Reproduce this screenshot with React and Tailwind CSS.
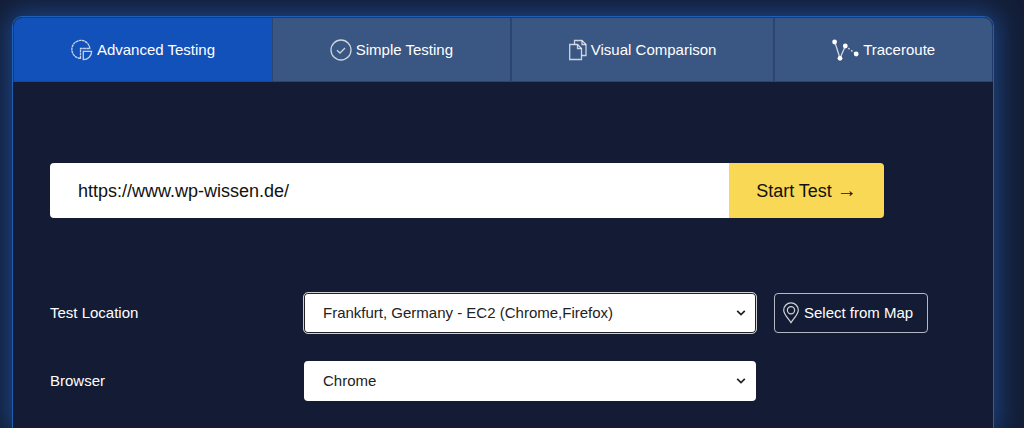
import React, { useState } from "react";

function PieIcon() {
  return (
    <svg className="h-[22px] w-[22px]" viewBox="0 0 22 22" fill="none" stroke="currentColor" strokeWidth="1.3" aria-hidden="true">
      <path d="M9.5 19.4A9 9 0 1 1 18.8 9.5H9.5Z" strokeDasharray="2.8 0.4" />
      <path d="M12.3 12.3H20.7A8.5 8.5 0 0 1 12.3 20.7Z" />
    </svg>
  );
}

function CheckIcon() {
  return (
    <svg className="h-[22px] w-[22px]" viewBox="0 0 22 22" fill="none" stroke="currentColor" strokeWidth="1.3" aria-hidden="true">
      <circle cx="11" cy="11" r="10" />
      <path d="M7 11.2 10 14 15 9" />
    </svg>
  );
}

function PagesIcon() {
  return (
    <svg className="h-[22px] w-[18px]" viewBox="0 0 18 22" fill="none" stroke="currentColor" strokeWidth="1.3" aria-hidden="true">
      <path d="M5.5 5.5V1.5H13L17 5.5V16.5H12.5" />
      <path d="M13 1.5V5.5H17" />
      <path d="M.7 5.5H8.5L12.5 9.5V20.5H.7Z" />
      <path d="M8.5 5.5V9.5H12.5" />
    </svg>
  );
}

function RouteIcon() {
  return (
    <svg className="h-[22px] w-[27px]" viewBox="0 0 27 22" fill="none" stroke="currentColor" strokeWidth="1.3" aria-hidden="true">
      <path d="M2.8 3 8 19.3 13.3 7" />
      <path d="M13.3 7 24 15" strokeWidth="1.5" strokeDasharray="1.8 1.8" />
      <g fill="#fff" stroke="none">
        <circle cx="2.6" cy="3" r="2.4" />
        <circle cx="8" cy="19.3" r="2.4" />
        <circle cx="13.3" cy="7" r="2.4" />
        <circle cx="24.2" cy="15" r="2.4" />
      </g>
    </svg>
  );
}

function PinIcon() {
  return (
    <svg className="h-[22px] w-4" viewBox="0 0 16 22" fill="none" stroke="currentColor" strokeWidth="1.2" aria-hidden="true">
      <path d="M8 20.6C6.2 17.6.7 12.4.7 8.2a7.3 7.3 0 0 1 14.6 0C15.3 12.4 9.8 17.6 8 20.6Z" />
      <circle cx="8" cy="8.2" r="3.6" />
    </svg>
  );
}

const tabs = [
  { id: "advanced", label: "Advanced Testing", icon: <PieIcon /> },
  { id: "simple", label: "Simple Testing", icon: <CheckIcon /> },
  { id: "visual", label: "Visual Comparison", icon: <PagesIcon /> },
  { id: "traceroute", label: "Traceroute", icon: <RouteIcon /> },
];

function Select({ id, options, highlighted = false }) {
  return (
    <div className="relative min-w-0 flex-1">
      <select
        id={id}
        className={`block h-10 w-full appearance-none rounded-sm bg-white pr-10 pl-[19px] text-[15px] text-[#222] ${
          highlighted ? "outline-1 outline-[#d0d0d0] ring-inset ring-1 ring-[#222]" : "outline-none"
        }`}
      >
        {options.map((o) => (
          <option key={o}>{o}</option>
        ))}
      </select>
      <svg
        className="pointer-events-none absolute top-4 right-2.5 h-2 w-2.5"
        viewBox="0 0 10 8"
        fill="none"
        stroke="#222"
        strokeWidth="1.7"
        aria-hidden="true"
      >
        <path d="M1.2 1.8 5 5.6 8.8 1.8" />
      </svg>
    </div>
  );
}

export default function App() {
  const [active, setActive] = useState("advanced");
  const [url, setUrl] = useState("https://www.wp-wissen.de/");

  return (
    <div className="flex min-h-screen flex-col overflow-hidden bg-[#131d36] pt-4 pr-[30px] pl-3 font-['Liberation_Sans',Arial,sans-serif] text-[15px] text-white">
      <main className="flex-1 rounded-t-[10px] border border-b-0 border-[#2160b8] bg-[#131c34] shadow-[0_0_26px_4px_#1d4684]">
        <nav className="flex overflow-hidden rounded-t-[9px] border border-b-0 border-[#203b6b]">
          {tabs.map((t) => (
            <button
              key={t.id}
              type="button"
              onClick={() => setActive(t.id)}
              className={`flex h-16 flex-auto cursor-pointer items-center justify-center gap-1 border-b border-[#2c4570] pt-px last:border-r-0 ${
                active === t.id ? "border-r bg-[#1250ba]" : "border-r-2 bg-[#3a5683]"
              }`}
            >
              <span className="text-white/75">{t.icon}</span>
              {t.label}
            </button>
          ))}
        </nav>

        <form className="pt-[81px] pb-[27px] pl-[37px]" onSubmit={(e) => e.preventDefault()}>
          <div className="mr-[109px] flex h-[55px] overflow-hidden rounded-sm text-lg text-[#111]">
            <input
              type="text"
              aria-label="Website URL"
              value={url}
              onChange={(e) => setUrl(e.target.value)}
              className="min-w-0 flex-1 bg-white px-7 outline-none"
            />
            <button type="submit" className="w-[155px] cursor-pointer bg-[#f9d856]">
              Start Test <span className="font-['Liberation_Serif',serif] text-xl leading-none">→</span>
            </button>
          </div>

          <div className="mt-[75px] mr-[65px] flex items-center">
            <label htmlFor="location" className="w-[254px]">
              Test Location
            </label>
            <Select id="location" options={["Frankfurt, Germany - EC2 (Chrome,Firefox)"]} highlighted />
            <button
              type="button"
              className="ml-[18px] flex h-10 w-[154px] cursor-pointer items-center gap-[5px] rounded-sm border border-[#b4b9c4] pl-2"
            >
              <span className="text-white/80">
                <PinIcon />
              </span>
              Select from Map
            </button>
          </div>

          <div className="mt-7 mr-[237px] flex items-center">
            <label htmlFor="browser" className="w-[254px]">
              Browser
            </label>
            <Select id="browser" options={["Chrome", "Firefox"]} />
          </div>
        </form>
      </main>
    </div>
  );
}
